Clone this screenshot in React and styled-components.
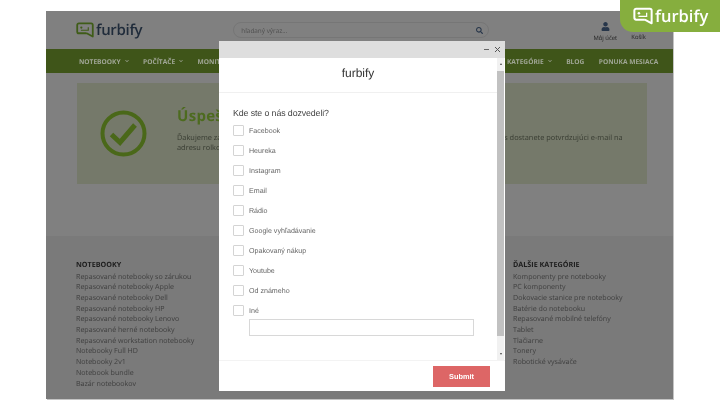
import React from 'react';
import styled, { createGlobalStyle } from 'styled-components';
import { FaUser, FaSearch, FaChevronDown } from 'react-icons/fa';

const GlobalStyle = createGlobalStyle`
  html, body {
    margin: 0;
    padding: 0;
    background: #fff;
  }
  body {
    width: 720px;
    height: 405px;
    overflow: hidden;
    font-family: "Open Sans", sans-serif;
    text-rendering: geometricPrecision;
  }
`;

const Screen = styled.div`
  position: relative;
  width: 720px;
  height: 405px;
  padding: 11px 46px 0;
  box-sizing: border-box;
  overflow: hidden;
  filter: blur(0.35px);
`;

const Page = styled.div`
  position: relative;
  width: 627px;
  height: 388px;
  background: #808080;
  box-shadow: 1px 1px 0 #c4c4c4;
  display: flex;
  flex-direction: column;
`;

const Header = styled.header`
  height: 38px;
  flex: none;
  display: flex;
  align-items: center;
  padding-left: 30px;
`;

const LogoWrap = styled.div`
  display: flex;
  align-items: center;
  gap: ${(p) => p.$gap}px;
  color: ${(p) => p.$color};
  font-size: ${(p) => p.$size}px;
  letter-spacing: ${(p) => p.$track}px;
  font-weight: 600;
  line-height: 1;
`;

const SearchBox = styled.div`
  width: 256px;
  height: 16px;
  margin-left: 91px;
  border: 1px solid #767676;
  border-radius: 9px;
  display: flex;
  align-items: center;
  justify-content: space-between;
  padding: 0 5px 0 7px;
  box-sizing: border-box;
  font-size: 6.4px;
  color: #4e4e4e;
  svg {
    color: #27364a;
  }
`;

const Account = styled.div`
  margin-left: 104px;
  width: 24px;
  display: flex;
  flex-direction: column;
  align-items: center;
  gap: 3px;
  margin-top: 4px;
  font-size: 5.9px;
  color: #222;
  white-space: nowrap;
  svg {
    color: #27364a;
  }
`;

const CartLabel = styled.div`
  margin-left: 14px;
  margin-top: 14px;
  font-size: 5.9px;
  color: #222;
`;

const Nav = styled.nav`
  height: 24px;
  flex: none;
  background: #3f5519;
  display: flex;
  align-items: center;
  gap: 14.5px;
  padding-left: 33px;
  font-size: 6.6px;
  font-weight: 700;
  color: #a0a696;
  white-space: nowrap;
`;

const NavItem = styled.span`
  display: flex;
  align-items: center;
  gap: 4px;
  svg {
    width: 4px;
    height: 4px;
  }
`;

const Success = styled.section`
  height: 101px;
  flex: none;
  margin: 10px 26px 0 31px;
  background: #75796a;
  display: flex;
  align-items: center;
  padding-left: 23px;
  box-sizing: border-box;
`;

const SuccessBody = styled.div`
  margin-left: 30px;
  margin-top: -9px;
  white-space: nowrap;
`;

const SuccessTitle = styled.h2`
  margin: 0 0 6px;
  font-size: 15px;
  letter-spacing: 0.3px;
  line-height: 22px;
  font-weight: 700;
  color: #4d6b1f;
`;

const SuccessText = styled.p`
  margin: 0;
  font-size: 7.4px;
  line-height: 10.5px;
  color: #383c32;
`;

const Footer = styled.footer`
  flex: 1;
  margin-top: 52px;
  background: #7a7a7a;
  display: grid;
  grid-template-columns: 437px 1fr;
  padding: 24px 0 0 30px;
`;

const FooterCol = styled.div`
  display: flex;
  flex-direction: column;
`;

const FooterTitle = styled.h4`
  margin: 0;
  font-size: 7.2px;
  line-height: 11.5px;
  font-weight: 700;
  color: #1e1e1e;
`;

const FooterLink = styled.a`
  font-size: 7.1px;
  line-height: 10.7px;
  color: #3e3e3e;
  white-space: nowrap;
`;

const Modal = styled.div`
  position: absolute;
  left: 219px;
  top: 41px;
  width: 286px;
  height: 350px;
  background: #fff;
  display: flex;
  flex-direction: column;
  font-family: "Liberation Sans", Arial, sans-serif;
`;

const TitleBar = styled.div`
  height: 17px;
  flex: none;
  background: #dedede;
  display: flex;
  align-items: center;
  justify-content: flex-end;
  gap: 6px;
  padding-right: 5px;
  svg {
    display: block;
  }
`;

const ModalMain = styled.div`
  flex: 1;
  display: flex;
  min-height: 0;
`;

const ModalContent = styled.div`
  flex: 1;
  min-width: 0;
`;

const ModalTitle = styled.div`
  height: 35px;
  padding-bottom: 4px;
  box-sizing: border-box;
  border-bottom: 1px solid #f0f0f0;
  display: flex;
  align-items: center;
  justify-content: center;
  font-size: 12px;
  color: #333;
`;

const Form = styled.div`
  padding: 14px 23px 0 14px;
`;

const Question = styled.div`
  font-size: 8.8px;
  letter-spacing: -0.1px;
  line-height: 12px;
  color: #444;
  margin-bottom: 6px;
`;

const OptionList = styled.div`
  display: flex;
  flex-direction: column;
  gap: 9px;
`;

const Option = styled.div`
  display: flex;
  align-items: center;
  gap: 5px;
  font-size: 7.1px;
  color: #666;
`;

const Box = styled.span`
  width: 11px;
  height: 11px;
  flex: none;
  border: 1px solid #d4d4d4;
  border-radius: 1px;
  box-sizing: border-box;
`;

const OtherInput = styled.div`
  height: 17px;
  margin: 3px 0 0 16px;
  border: 1px solid #d8d8d8;
  box-sizing: border-box;
`;

const Scrollbar = styled.div`
  width: 7px;
  margin-right: 1px;
  flex: none;
  background: #f1f1f1;
  display: flex;
  flex-direction: column;
  align-items: center;
`;

const ScrollArrow = styled.span`
  height: 12px;
  flex: none;
  display: flex;
  align-items: center;
  &::before {
    content: '';
    border-left: 1.5px solid transparent;
    border-right: 1.5px solid transparent;
    ${(p) => (p.$up ? 'border-bottom: 2px solid #444;' : 'border-top: 2px solid #444;')}
  }
`;

const ScrollThumb = styled.span`
  flex: 1;
  width: 100%;
  background: #c1c1c1;
  margin: 1px 0 12px;
`;

const ModalFooter = styled.div`
  height: 30px;
  flex: none;
  border-top: 1px solid #f3f3f3;
  display: flex;
  align-items: center;
  justify-content: flex-end;
  padding-right: 15px;
`;

const Submit = styled.button`
  width: 57px;
  height: 21px;
  border: none;
  padding: 0;
  background: #dd6666;
  color: #fff;
  font-family: inherit;
  font-size: 7.4px;
  font-weight: 700;
`;

const Badge = styled.div`
  position: absolute;
  right: 0;
  top: 0;
  width: 100px;
  height: 32px;
  background: #86ae3e;
  border-bottom-left-radius: 13px;
  display: flex;
  align-items: center;
  padding-left: 13px;
  box-sizing: border-box;
`;

const footerLeft = [
  'Repasované notebooky so zárukou',
  'Repasované notebooky Apple',
  'Repasované notebooky Dell',
  'Repasované notebooky HP',
  'Repasované notebooky Lenovo',
  'Repasované herné notebooky',
  'Repasované workstation notebooky',
  'Notebooky Full HD',
  'Notebooky 2v1',
  'Notebook bundle',
  'Bazár notebookov',
];

const footerRight = [
  'Komponenty pre notebooky',
  'PC komponenty',
  'Dokovacie stanice pre notebooky',
  'Batérie do notebooku',
  'Repasované mobilné telefóny',
  'Tablet',
  'Tlačiarne',
  'Tonery',
  'Robotické vysávače',
];

const options = [
  'Facebook',
  'Heureka',
  'Instagram',
  'Email',
  'Rádio',
  'Google vyhľadávanie',
  'Opakovaný nákup',
  'Youtube',
  'Od známeho',
  'Iné',
];

function LogoMark({ color, width, height }) {
  return (
    <svg width={width} height={height} viewBox="0 0 22 19" fill="none">
      <path
        d="M13 13.500H3.500A2 2 0 0 1 1.500 11.500V3.500A2 2 0 0 1 3.500 1.500H18.500A2 2 0 0 1 20.500 3.500V17.500L13 13.500"
        stroke={color}
        strokeWidth="2.200"
        strokeLinejoin="round"
      />
      <circle cx="6.500" cy="6.500" r="1.400" fill={color} />
      <path d="M6 9.800H15V6" stroke={color} strokeWidth="1.400" />
    </svg>
  );
}

function Logo({ color, textColor, size, track, gap, width, height }) {
  return (
    <LogoWrap $color={textColor} $size={size} $track={track} $gap={gap}>
      <LogoMark color={color} width={width} height={height} />
      furbify
    </LogoWrap>
  );
}

function CheckCircle() {
  return (
    <svg width="47" height="47" viewBox="0 0 47 47" fill="none">
      <circle cx="23.500" cy="23.500" r="21" stroke="#4a6819" strokeWidth="4" />
      <path d="M11.500 24.500L20 32.500L35 15" stroke="#4a6819" strokeWidth="5" />
    </svg>
  );
}

export default function App() {
  return (
    <Screen>
      <GlobalStyle />
      <Page>
        <Header>
          <Logo color="#3f5c18" textColor="#1f2b3a" size={15} track={-0.3} gap={2} width={18} height={16} />
          <SearchBox>
            hľadaný výraz...
            <FaSearch size={7} />
          </SearchBox>
          <Account>
            <FaUser size={9} />
            Môj účet
          </Account>
          <CartLabel>Košík</CartLabel>
        </Header>
        <Nav>
          <NavItem>NOTEBOOKY <FaChevronDown /></NavItem>
          <NavItem>POČÍTAČE <FaChevronDown /></NavItem>
          <NavItem>MONITORY <FaChevronDown /></NavItem>
          <NavItem>TELEFÓNY <FaChevronDown /></NavItem>
          <NavItem>TABLETY <FaChevronDown /></NavItem>
          <NavItem>SERVIS <FaChevronDown /></NavItem>
          <NavItem>PRÍSLUŠENSTVO <FaChevronDown /></NavItem>
          <NavItem>ĎALŠIE KATEGÓRIE <FaChevronDown /></NavItem>
          <NavItem>BLOG</NavItem>
          <NavItem>PONUKA MESIACA</NavItem>
        </Nav>
        <Success>
          <CheckCircle />
          <SuccessBody>
            <SuccessTitle>Úspešne objednané</SuccessTitle>
            <SuccessText>
              Ďakujeme za Vašu objednávku, ktorá bola úspešne prijatá a odoslaná do skladu. Čoskoro od nás dostanete potvrdzujúci e-mail na
              <br />
              adresu rolko@furbify.sk.
            </SuccessText>
          </SuccessBody>
        </Success>
        <Footer>
          <FooterCol>
            <FooterTitle>NOTEBOOKY</FooterTitle>
            {footerLeft.map((t) => <FooterLink key={t}>{t}</FooterLink>)}
          </FooterCol>
          <FooterCol>
            <FooterTitle>ĎALŠIE KATEGÓRIE</FooterTitle>
            {footerRight.map((t) => <FooterLink key={t}>{t}</FooterLink>)}
          </FooterCol>
        </Footer>
      </Page>
      <Modal>
        <TitleBar>
          <svg width="5" height="5" viewBox="0 0 5 5"><path d="M0 2.500H5" stroke="#666" /></svg>
          <svg width="5" height="5" viewBox="0 0 5 5"><path d="M0 0L5 5M5 0L0 5" stroke="#555" /></svg>
        </TitleBar>
        <ModalMain>
          <ModalContent>
            <ModalTitle>furbify</ModalTitle>
            <Form>
              <Question>Kde ste o nás dozvedeli?</Question>
              <OptionList>
                {options.map((o) => (
                  <Option key={o}>
                    <Box />
                    {o}
                  </Option>
                ))}
              </OptionList>
              <OtherInput />
            </Form>
          </ModalContent>
          <Scrollbar>
            <ScrollArrow $up />
            <ScrollThumb />
            <ScrollArrow />
          </Scrollbar>
        </ModalMain>
        <ModalFooter>
          <Submit>Submit</Submit>
        </ModalFooter>
      </Modal>
      <Badge>
        <Logo color="#fff" textColor="#fff" size={16.5} track={0} gap={2} width={20} height={18} />
      </Badge>
    </Screen>
  );
}
